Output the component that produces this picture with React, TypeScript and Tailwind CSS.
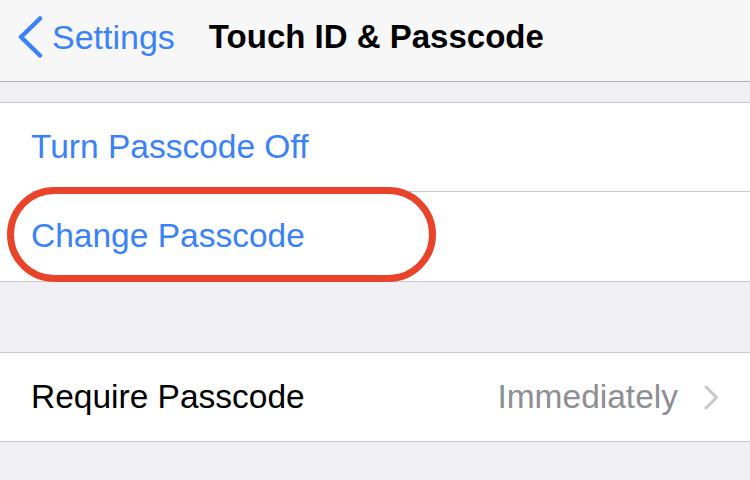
import React from "react";

const font = { fontFamily: '"Liberation Sans", Arial, sans-serif' };

export default function App() {
  return (
    <div className="w-[750px] h-[480px] overflow-hidden bg-[#efeff4]" style={font}>
      {/* Nav bar */}
      <header className="h-[82px] bg-[#f7f7f7] border-b border-[#b2b2b2] relative flex items-center pb-[8px]">
        <div className="flex items-center pl-[17px] text-[#3a82f7]">
          <svg width="26" height="42" viewBox="0 0 26 42" fill="none">
            <path d="M23 2.5 L4 21 L23 39.5" stroke="#3a82f7" strokeWidth="4.5" strokeLinecap="round" strokeLinejoin="round" />
          </svg>
          <span className="ml-[9px] text-[34px] leading-none">Settings</span>
        </div>
        <span className="ml-[34px] text-[33px] font-bold leading-none text-black">Touch ID &amp; Passcode</span>
      </header>

      <div className="h-[20px]" />

      {/* Passcode actions */}
      <div className="bg-white border-y border-[#c8c7cc]">
        <div className="h-[88px] flex items-center pl-[31px] text-[33.5px] text-[#3a82f7]">Turn Passcode Off</div>
        <div className="ml-[32px] h-px bg-[#c8c7cc]" />
        <div className="relative h-[89px] flex items-center pl-[31px] text-[33.5px] text-[#3a82f7]">
          Change Passcode
          <div className="absolute left-[7px] -top-[5px] w-[429px] h-[95px] rounded-full border-[7px] border-[#e9432a]" />
        </div>
      </div>

      <div className="h-[70px]" />

      <div className="bg-white border-y border-[#c8c7cc]">
        <div className="h-[88px] flex items-center pl-[31px] pr-[31px] text-[33.5px]">
          <span className="flex-1 text-black">Require Passcode</span>
          <span className="text-[#8e8e93]">Immediately</span>
          <svg className="ml-[26px]" width="15" height="25" viewBox="0 0 15 25" fill="none">
            <path d="M2 2 L12.5 12.5 L2 23" stroke="#c7c7cc" strokeWidth="3" strokeLinecap="round" strokeLinejoin="round" />
          </svg>
        </div>
      </div>
    </div>
  );
}
